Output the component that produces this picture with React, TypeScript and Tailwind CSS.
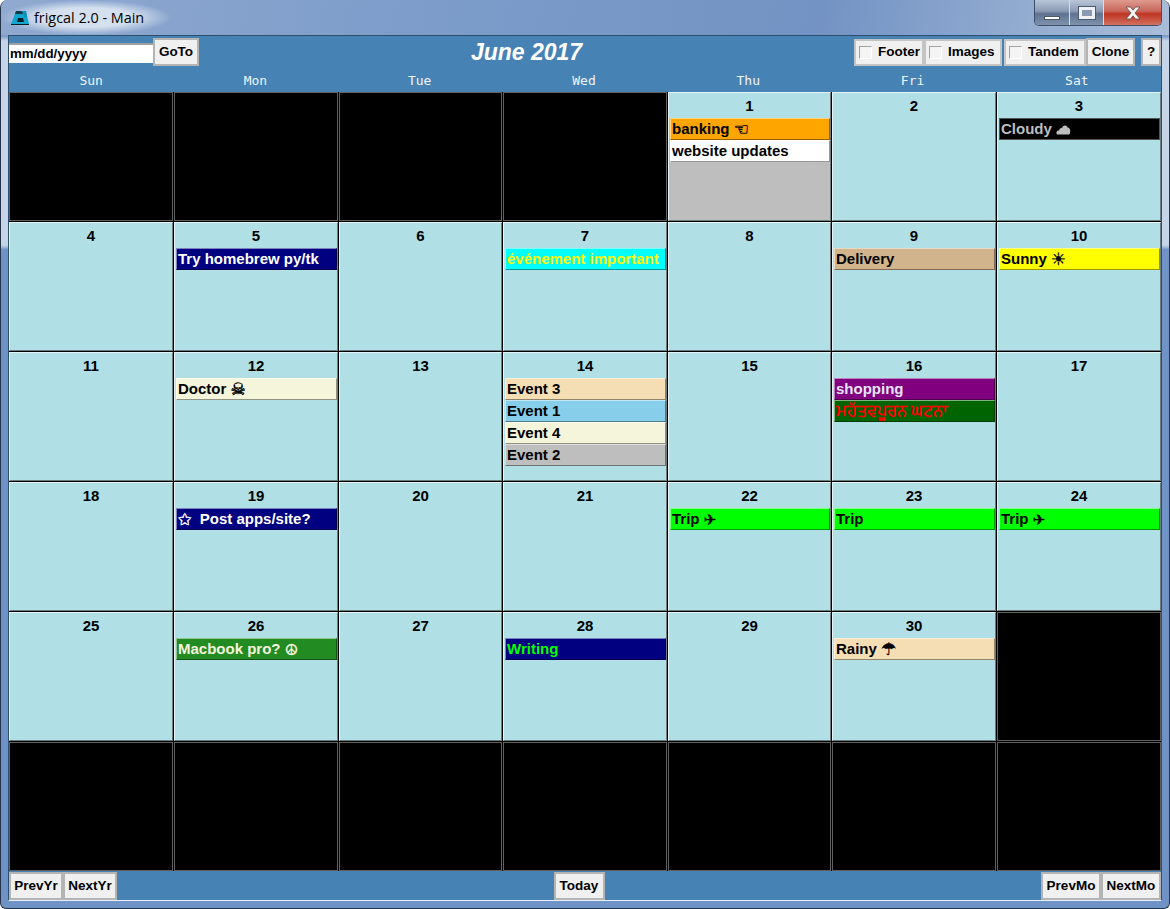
type Ev = { text: string; icon?: string; lead?: string; cls: string };

const raised = 'border-t-white/50 border-l-white/50 border-r-black/40 border-b-black/40';

const events: Record<number, Ev[]> = {
  1: [
    { text: 'banking', icon: '☜', cls: 'bg-[#ffa500] text-black' },
    { text: 'website updates', cls: 'bg-white text-black' },
  ],
  3: [{ text: 'Cloudy', icon: '☁', cls: 'bg-black text-[#bebebe] !border-[#555555]' }],
  5: [{ text: 'Try homebrew py/tk', cls: 'bg-[#000080] text-white' }],
  7: [{ text: 'événement important', cls: 'bg-[#00ffff] text-[#ffff00]' }],
  9: [{ text: 'Delivery', cls: 'bg-[#d2b48c] text-black' }],
  10: [{ text: 'Sunny', icon: '☀', cls: 'bg-[#ffff00] text-black' }],
  12: [{ text: 'Doctor', icon: '☠', cls: 'bg-[#f5f5dc] text-black' }],
  14: [
    { text: 'Event 3', cls: 'bg-[#f5deb3] text-black' },
    { text: 'Event 1', cls: 'bg-[#87ceeb] text-black' },
    { text: 'Event 4', cls: 'bg-[#f5f5dc] text-black' },
    { text: 'Event 2', cls: 'bg-[#bebebe] text-black' },
  ],
  16: [
    { text: 'shopping', cls: 'bg-[#800080] text-[#e6e6fa]' },
    { text: 'ਮਹੱਤਵਪੂਰਨ ਘਟਨਾ', cls: 'bg-[#006400] text-[#ff0000] !text-[16px]' },
  ],
  19: [{ text: 'Post apps/site?', lead: '✩', cls: 'bg-[#000080] text-white' }],
  22: [{ text: 'Trip', icon: '✈', cls: 'bg-[#00ff00] text-black' }],
  23: [{ text: 'Trip', cls: 'bg-[#00ff00] text-black' }],
  24: [{ text: 'Trip', icon: '✈', cls: 'bg-[#00ff00] text-black' }],
  26: [{ text: 'Macbook pro?', icon: '☮', cls: 'bg-[#228b22] text-[#f5f5dc]' }],
  28: [{ text: 'Writing', cls: 'bg-[#000080] text-[#00ff00]' }],
  30: [{ text: 'Rainy', icon: '☂', cls: 'bg-[#f5deb3] text-black' }],
};

const days = ['Sun', 'Mon', 'Tue', 'Wed', 'Thu', 'Fri', 'Sat'];

// June 2017 starts on a Thursday, six rows of seven
const cells = Array.from({ length: 42 }, (_, i) => {
  const d = i - 3;
  return d >= 1 && d <= 30 ? d : 0;
});

const btn =
  'flex items-center justify-center bg-[#f0f0f0] border-2 border-[#b4b4b4] text-[13.5px] font-bold text-black';

const Glyph = ({ ch }: { ch: string }) => {
  if (ch === '☁') {
    return (
      <svg width="15" height="11" viewBox="0 0 15 11" className="inline-block align-[-1px]">
        <path d="M1 10.500C-.5 8.500 1 6 3 6.500 3.500 4.500 5 3.800 6 4.200 6.500 1 10.500.5 11.500 3.500 13.500 3.500 15 6.500 14 8c.5 2-1 2.500-2 2.500z" fill="currentColor" />
      </svg>
    );
  }
  const size = ch === '✈' || ch === '☮' ? 'text-[15px]' : ch === '✩' ? 'text-[16px]' : 'text-[17px]';
  return (
    <span className={`font-['DejaVu_Sans',sans-serif] leading-[18px] align-[-1px] [-webkit-text-stroke:0.4px] ${size}`}>
      {ch}
    </span>
  );
};

const Check = ({ label, width }: { label: string; width: string }) => (
  <div className={`flex items-center h-[27px] bg-[#f0f0f0] border-2 border-[#c4c4c4] text-[13.5px] font-bold text-black pl-[3px] ${width}`}>
    <span className="w-[13px] h-[13px] bg-[#f4f4f4] border border-t-[#a0a0a0] border-l-[#a0a0a0] border-r-white border-b-white shrink-0" />
    <span className="ml-[6px]">{label}</span>
  </div>
);

const DayCell = ({ day }: { day: number }) => {
  if (!day) return <div className="bg-black border border-[#606060]" />;
  const list = events[day] ?? [];
  return (
    <div className={`flex flex-col border border-t-[#e4f4f6] border-l-[#e4f4f6] border-r-[#6c7c7e] border-b-[#6c7c7e] ${day === 1 ? 'bg-[#bebebe]' : 'bg-[#b0e0e6]'}`}>
      <div className="h-[25px] pt-[2px] shrink-0 bg-[#b0e0e6] flex items-center justify-center text-[15px] font-bold text-black">
        {day}
      </div>
      <div className="flex flex-col pl-[1px]">
        {list.map((e) => (
          <div key={e.text} className={`h-[22px] border leading-[20px] pl-[1px] text-[15px] font-bold whitespace-nowrap overflow-hidden ${raised} ${e.cls}`}>
            {e.lead && (
              <>
                <Glyph ch={e.lead} />
                {'\u00a0\u00a0'}
              </>
            )}
            {e.text}
            {e.icon && (
              <>
                {' '}
                <Glyph ch={e.icon} />
              </>
            )}
          </div>
        ))}
      </div>
    </div>
  );
};

const App = () => {
  return (
    <div className="relative w-[1170px] h-[909px] overflow-hidden font-['Liberation_Sans','DejaVu_Sans','Noto_Sans',sans-serif] bg-[linear-gradient(180deg,#7f9dca_0%,#7f9dca_4%,#c6d4e8_4.5%,#c6d4e8_27%,#6f93c6_27.5%,#6f93c6_100%)] rounded-t-[8px] rounded-b-[6px] border-x border-b border-[#26344a]">
      <div className="h-[35px] flex justify-between bg-[linear-gradient(100deg,#8fa9d0_0%,#7b9bc9_40%,#7393c4_70%,#a9bdd9_100%)]">
        <div className="flex items-center pl-[9px] h-[35px] w-[170px] font-['Open_Sans',sans-serif] text-[14.4px] text-black bg-[radial-gradient(ellipse_closest-side,#d5e0ef_55%,transparent)]">
          <svg width="20" height="16" viewBox="0 0 20 16" className="mr-[4px] shrink-0">
            <path d="M6 1h10l3 13H1z" fill="#12a6cf" />
            <path d="M6 1h6l1 3H5z" fill="#123a4a" />
            <path d="M13 1h3l1 6h-3z" fill="#0f8fb5" />
            <path d="M8 8h5l1 4H7z" fill="#0a1c26" />
            <path d="M1 14h18v1H1z" fill="#0a1c26" />
          </svg>
          frigcal 2.0 - Main
        </div>
        <div className="flex h-[26px] mr-[7px] border border-t-0 border-[#3f4f66] rounded-b-[5px] overflow-hidden">
          <div className="w-[35px] flex items-end justify-center pb-[5px] bg-[linear-gradient(180deg,#b9c6d9_0%,#8a9ab3_45%,#5f7290_55%,#7f93ad_100%)] border-r border-[#d6deea]">
            <span className="w-[16px] h-[4px] bg-white border border-[#4a5a70]" />
          </div>
          <div className="w-[34px] flex items-center justify-center bg-[linear-gradient(180deg,#b9c6d9_0%,#8a9ab3_45%,#5f7290_55%,#7f93ad_100%)] border-r border-[#d6deea]">
            <span className="w-[16px] h-[12px] bg-[#8a9ab3] border-[3px] border-[#eef1f5] outline outline-[#4a5a70]" />
          </div>
          <div className="w-[57px] flex items-center justify-center bg-[linear-gradient(180deg,#dd9a8d_0%,#c9655a_45%,#bf3423_55%,#d2705f_100%)]">
            <svg width="16" height="14" viewBox="0 0 16 14">
              <path d="M1 1h4.500L8 4.200 10.500 1H15l-5 6 5 6h-4.500L8 9.800 5.500 13H1l5-6z" fill="#f4f4f4" stroke="#5a4a4a" strokeWidth="0.8" />
            </svg>
          </div>
        </div>
      </div>

      <div className="mx-[7px] h-[866px] bg-[#4682b4] flex flex-col border border-b-[#e8eef6] border-t-[#2c4f6e] border-x-[#2c4f6e]">
        <div className="h-[30px] flex justify-between items-start shrink-0 pt-[2px]">
          <div className="flex items-start">
            <div className="w-[144px] h-[20px] mt-[5px] bg-white border-t-2 border-[#a0a0a0] text-[13.3px] font-bold leading-[18px] pl-[1px] text-black">
              mm/dd/yyyy
            </div>
            <div className={`${btn} w-[46px] h-[28px]`}>GoTo</div>
          </div>
          <div className="text-[23px] font-bold italic text-white leading-[28px]">June 2017</div>
          <div className="flex items-start">
            <div className="flex mt-[1px]">
              <Check label="Footer" width="w-[70px]" />
              <Check label="Images" width="w-[78px]" />
            </div>
            <div className="flex mt-[1px] ml-[2px]">
              <Check label="Tandem" width="w-[82px]" />
            </div>
            <div className={`${btn} w-[49px] h-[28px]`}>Clone</div>
            <div className={`${btn} w-[20px] h-[28px] ml-[6px]`}>?</div>
          </div>
        </div>

        <div className="h-[26px] pt-[3px] pr-[2px] grid grid-cols-7 shrink-0 items-center font-['DejaVu_Sans_Mono',monospace] text-[13px] text-[#f0f5fa] text-center">
          {days.map((d) => (
            <div key={d}>{d}</div>
          ))}
        </div>

        <div className="h-[779px] grid grid-cols-[164px_164px_163px_164px_163px_164px_1fr] grid-rows-6 gap-px bg-black shrink-0">
          {cells.map((d, i) => (
            <DayCell key={i} day={d} />
          ))}
        </div>

        <div className="flex-1 flex justify-between items-start pt-[1px]">
          <div className="flex">
            <div className={`${btn} w-[54px] h-[28px]`}>PrevYr</div>
            <div className={`${btn} w-[54px] h-[28px]`}>NextYr</div>
          </div>
          <div className={`${btn} w-[51px] h-[28px]`}>Today</div>
          <div className="flex">
            <div className={`${btn} w-[60px] h-[28px]`}>PrevMo</div>
            <div className={`${btn} w-[60px] h-[28px]`}>NextMo</div>
          </div>
        </div>
      </div>
    </div>
  );
};

export default App;
